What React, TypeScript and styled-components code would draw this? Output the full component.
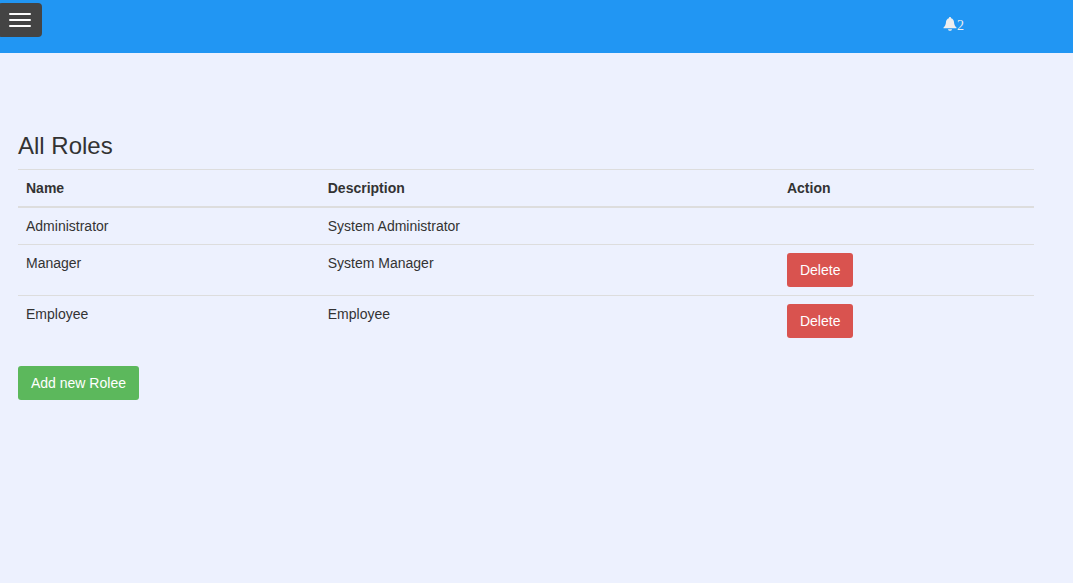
import React from "react";
import styled, { createGlobalStyle } from "styled-components";

const GlobalStyle = createGlobalStyle`
  *, *::before, *::after { box-sizing: border-box; }
  body {
    margin: 0;
    background: #edf1fe;
    color: #333;
    font-family: "Liberation Sans", Arial, sans-serif;
    font-size: 14px;
    line-height: 20px;
  }
`;

const TopBar = styled.header`
  display: flex;
  justify-content: space-between;
  align-items: flex-start;
  height: 53px;
  padding: 3px 109px 0 0;
  background: #2196f3;
`;

const MenuButton = styled.button`
  display: flex;
  flex-direction: column;
  gap: 4px;
  margin: 0 0 0 -2px;
  padding: 10px 11px;
  border: 0;
  border-radius: 4px;
  background: #444;
  cursor: pointer;
`;

const MenuBar = styled.span`
  width: 22px;
  height: 2px;
  border-radius: 1px;
  background: #fff;
`;

const Notifications = styled.a`
  display: flex;
  align-items: flex-start;
  padding-top: 14px;
  color: #eee;
  font-family: "Liberation Serif", "Times New Roman", serif;
  line-height: 18px;
  text-decoration: none;
`;

const BellIcon = styled.svg`
  width: 14px;
  height: 14px;
  fill: currentColor;
`;

const Content = styled.main`
  padding: 80px 39px 20px 18px;
`;

const Title = styled.h1`
  margin: 0 0 10px;
  font-size: 24px;
  font-weight: 400;
  line-height: 26px;
`;

const RolesTable = styled.table`
  width: 100%;
  margin-bottom: 20px;
  border-collapse: collapse;
  table-layout: fixed;
`;

const HeadCell = styled.th<{ $width?: string }>`
  width: ${({ $width }) => $width ?? "auto"};
  padding: 8px;
  border-top: 1px solid #ddd;
  border-bottom: 2px solid #ddd;
  text-align: left;
`;

const Cell = styled.td`
  padding: 8px;
  border-top: 1px solid #ddd;
  vertical-align: top;
`;

const Button = styled.button<{ $tone: "danger" | "success" }>`
  display: block;
  padding: 7px 13px;
  border: 0;
  border-radius: 3px;
  background: ${({ $tone }) => ($tone === "danger" ? "#d9534f" : "#5cb85c")};
  color: #fff;
  font: inherit;
  cursor: pointer;
`;

const roles = [
  { name: "Administrator", description: "System Administrator", removable: false },
  { name: "Manager", description: "System Manager", removable: true },
  { name: "Employee", description: "Employee", removable: true },
];

export default function App() {
  return (
    <>
      <GlobalStyle />
      <TopBar>
        <MenuButton type="button" aria-label="Toggle navigation">
          <MenuBar />
          <MenuBar />
          <MenuBar />
        </MenuButton>
        <Notifications href="#" aria-label="2 notifications">
          <BellIcon viewBox="0 0 14 14" aria-hidden="true">
            <path d="M7 0c.7 0 1.100.5 1.100 1.200C9.900 1.700 10.900 3.200 11 5c.2 2.600.9 4.200 2.500 5.500v.8H.5v-.8C2.100 9.200 2.800 7.600 3 5c.1-1.800 1.100-3.300 2.900-3.800C5.900.5 6.300 0 7 0z" />
            <path d="M5 12.200h4c-.2 1-1 1.600-2 1.600s-1.800-.6-2-1.600z" />
          </BellIcon>
          <span>2</span>
        </Notifications>
      </TopBar>
      <Content>
        <Title>All Roles</Title>
        <RolesTable>
          <thead>
            <tr>
              <HeadCell scope="col" $width="29.7%">Name</HeadCell>
              <HeadCell scope="col" $width="45.2%">Description</HeadCell>
              <HeadCell scope="col">Action</HeadCell>
            </tr>
          </thead>
          <tbody>
            {roles.map((role) => (
              <tr key={role.name}>
                <Cell>{role.name}</Cell>
                <Cell>{role.description}</Cell>
                <Cell>
                  {role.removable && <Button type="button" $tone="danger">Delete</Button>}
                </Cell>
              </tr>
            ))}
          </tbody>
        </RolesTable>
        <Button type="button" $tone="success">Add new Rolee</Button>
      </Content>
    </>
  );
}
